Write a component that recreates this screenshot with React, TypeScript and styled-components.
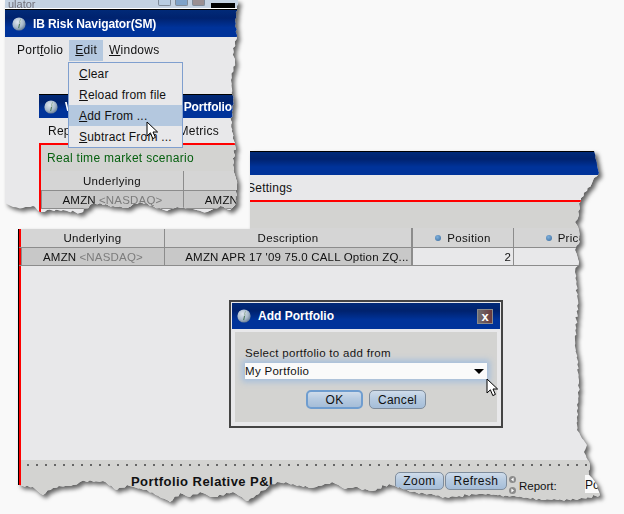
import React from "react";
import styled, { createGlobalStyle } from "styled-components";

type Pt = [number, number];

const torn = (anchors: Pt[], jagged: boolean[], ox: number, oy: number): string => {
  const out: string[] = [];
  let seed = 7;
  const rnd = () => {
    seed = (seed * 9301 + 49297) % 233280;
    return seed / 233280;
  };
  anchors.forEach((a, i) => {
    const b = anchors[(i + 1) % anchors.length];
    out.push(`${a[0] - ox}px ${a[1] - oy}px`);
    if (!jagged[i]) return;
    const len = Math.hypot(b[0] - a[0], b[1] - a[1]);
    const n = Math.floor(len / 3);
    for (let k = 1; k < n; k++) {
      const t = k / n;
      const s = k % 2 ? 1 : -1;
      const x = a[0] + (b[0] - a[0]) * t + s * rnd() * 1.3;
      const y = a[1] + (b[1] - a[1]) * t + s * rnd() * 1.3;
      out.push(`${(x - ox).toFixed(1)}px ${(y - oy).toFixed(1)}px`);
    }
  });
  return `polygon(${out.join(",")})`;
};

const bigRight: Pt[] = [
  [594, 151], [597, 165], [599, 173], [594, 178], [592, 183], [581, 198], [579, 215], [575, 222], [579, 230],
  [580, 240], [575, 250], [579, 262], [575, 272], [578, 300], [575, 340], [579, 380], [577, 430], [587, 445],
  [584, 452], [590, 465], [589, 475], [595, 482], [599, 492], [600, 495],
];
const bigBottom: Pt[] = [
  [579, 499], [545, 500], [512, 496], [479, 494], [459, 496], [445, 497], [429, 494], [412, 492], [389, 484],
  [372, 491], [355, 487], [345, 489], [332, 482], [312, 488], [293, 484], [277, 482], [267, 488], [248, 501],
  [233, 492], [213, 497], [200, 492], [190, 497], [180, 493], [170, 502], [147, 490], [127, 485], [117, 490],
  [103, 481], [80, 482], [73, 485], [53, 488], [43, 495], [33, 487], [18, 485],
];
const bigPts: Pt[] = [[250, 151], ...bigRight, ...bigBottom, [18, 229], [250, 229]];
const bigJag = bigPts.map((_, i) => i > 0 && i < bigPts.length - 3);
const bigClip = torn(bigPts, bigJag, 18, 151);

const smallPts: Pt[] = [
  [5, 0], [238, 0], [235, 20], [237, 35], [233, 48], [235, 62], [231, 80], [233, 100], [231, 125], [235, 145],
  [233, 165], [237, 185], [235, 205], [230, 210], [220, 206], [207, 212], [190, 209], [177, 207], [167, 211],
  [153, 206], [140, 202], [127, 208], [113, 206], [100, 203], [90, 205], [80, 213], [63, 210], [47, 210],
  [40, 212], [33, 206], [23, 208], [13, 207], [5, 203],
];
const smallJag = smallPts.map((_, i) => i > 0 && i < smallPts.length - 1);
const smallClip = torn(smallPts, smallJag, 0, 0);

const Global = createGlobalStyle`
  html, body { margin: 0; padding: 0; background: #f9f9f9; overflow: hidden; }
  body { font-family: "Liberation Sans", Arial, sans-serif; font-size: 12px; color: #111; }
`;

const Page = styled.div`
  position: relative;
  width: 624px;
  height: 514px;
  overflow: hidden;
  background: #f9f9f9;
`;

const Shadow = styled.div<{ $x: number; $y: number; $w: number; $h: number }>`
  position: absolute;
  left: ${(p) => p.$x}px;
  top: ${(p) => p.$y}px;
  width: ${(p) => p.$w}px;
  height: ${(p) => p.$h}px;
  filter: drop-shadow(3px 3px 2px rgba(0, 0, 0, 0.6));
`;

const Torn = styled.div`
  position: relative;
  width: 100%;
  height: 100%;
  display: flex;
  flex-direction: column;
  background: #e8e8ea;
`;

const TitleBar = styled.div<{ $h: number }>`
  flex: none;
  display: flex;
  align-items: center;
  gap: 7px;
  height: ${(p) => p.$h}px;
  padding-left: 5px;
  box-sizing: border-box;
  border-top: 1px solid #000;
  background: linear-gradient(#012a78 0%, #00226e 30%, #00339a 65%, #00339a 100%);
  color: #fff;
  font-weight: bold;
  font-size: 12px;
  letter-spacing: -0.1px;
  white-space: nowrap;
`;

const MenuBar = styled.div<{ $h: number; $pad: number }>`
  flex: none;
  display: flex;
  align-items: center;
  height: ${(p) => p.$h}px;
  padding-left: ${(p) => p.$pad}px;
  background: #e8e8ea;
  font-size: 12px;
  letter-spacing: 0.25px;
  white-space: nowrap;
`;

const RedLine = styled.div`
  flex: none;
  height: 2px;
  background: #f00;
`;

const GrayBand = styled.div`
  flex: none;
  height: 26px;
  display: flex;
  align-items: center;
  padding-left: 6px;
  background: #d3d3d1;
  color: #06600f;
  font-size: 12px;
  letter-spacing: 0.3px;
`;

const HeaderRow = styled.div<{ $cols: string }>`
  flex: none;
  display: grid;
  grid-template-columns: ${(p) => p.$cols};
  height: 19px;
  background: #d5d5d5;
  border-bottom: 1px solid #8c8c8c;
`;

const HeadCell = styled.div<{ $thick?: boolean }>`
  display: flex;
  align-items: center;
  justify-content: center;
  gap: 6px;
  border-right: ${(p) => (p.$thick ? 2 : 1)}px solid #8c8c8c;
  font-size: 11.5px;
  letter-spacing: 0.3px;
  white-space: nowrap;
  overflow: hidden;
`;

const Dot = styled.span`
  width: 6px;
  height: 6px;
  border-radius: 50%;
  background: radial-gradient(circle at 40% 35%, #7fb0dc, #37699c);
`;

const DataRow = styled.div<{ $cols: string }>`
  flex: none;
  display: grid;
  grid-template-columns: ${(p) => p.$cols};
  height: 17px;
  border-bottom: 1px solid #8c8c8c;
`;

const DataCell = styled.div<{ $shade?: boolean; $right?: boolean; $thick?: boolean; $edge?: boolean; $lead?: number }>`
  display: flex;
  align-items: center;
  justify-content: ${(p) => (p.$right ? "flex-end" : "center")};
  padding-right: ${(p) => (p.$right ? 2 : 0)}px;
  padding-left: ${(p) => p.$lead ?? 0}px;
  background: ${(p) => (p.$shade ? "#c8c8c8" : "#e8e8ea")};
  border-right: ${(p) => (p.$thick ? 2 : 1)}px solid #8c8c8c;
  border-left: ${(p) => (p.$edge ? "1px solid #8c8c8c" : "none")};
  font-size: 11.5px;
  letter-spacing: 0.2px;
  white-space: nowrap;
  overflow: hidden;
`;

const Muted = styled.span`
  color: #7c7c7c;
  margin-left: 3px;
`;

const Content = styled.div`
  flex: 1;
  display: flex;
  min-height: 0;
  border-left: 1px solid #000;
`;

const RedEdge = styled.div`
  flex: none;
  width: 2px;
  background: #f00;
`;

const ContentCol = styled.div`
  flex: 1;
  min-width: 0;
  display: flex;
  flex-direction: column;
`;

const BigTop = styled.div`
  flex: none;
  display: flex;
  flex-direction: column;
`;

const Spacer = styled.div`
  flex: 1;
`;

const BottomBar = styled.div`
  flex: none;
  height: 48px;
  box-sizing: border-box;
  padding-top: 4px;
  background: #d3d3d1;
  display: flex;
  flex-direction: column;
`;

const Dots = styled.div`
  height: 2px;
  margin: 0 0 0 6px;
  background: radial-gradient(circle at 1px 1px, #666 1px, transparent 1.4px) 0 0 / 9px 2px repeat-x;
`;

const BarRow = styled.div`
  display: flex;
  align-items: flex-start;
  padding: 6px 0 0 110px;
`;

const ChartTitle = styled.div`
  width: 264px;
  padding-top: 2px;
  font-weight: bold;
  font-size: 13px;
  letter-spacing: 0.45px;
  white-space: nowrap;
`;

const BarButton = styled.div<{ $w: number }>`
  width: ${(p) => p.$w}px;
  height: 18px;
  box-sizing: border-box;
  display: flex;
  align-items: center;
  justify-content: center;
  border: 1px solid #7e8c9c;
  border-radius: 5px;
  background: linear-gradient(#cfdcea 0%, #b7cbe1 45%, #a5bdd8 100%);
  font-size: 12px;
  letter-spacing: 0.4px;
  margin-right: 1px;
`;

const Arrows = styled.div`
  display: flex;
  flex-direction: column;
  gap: 4px;
  margin: 4px 3px 0 1px;
`;

const Report = styled.div`
  width: 66px;
  padding-top: 8px;
  font-size: 11.5px;
`;

const ReportBox = styled.div`
  width: 30px;
  height: 18px;
  margin-top: 3px;
  background: #fafafa;
  font-size: 12px;
  line-height: 20px;
`;

const Dialog = styled.div`
  position: absolute;
  left: 211px;
  top: 149px;
  width: 274px;
  height: 128px;
  box-sizing: border-box;
  border: 2px solid #444;
  background: #e8e8ea;
  padding: 1px;
  display: flex;
  flex-direction: column;
`;

const DialogTitle = styled.div`
  flex: none;
  height: 26px;
  display: flex;
  align-items: center;
  gap: 7px;
  padding-left: 5px;
  background: linear-gradient(#012a78 0%, #00226e 30%, #00339a 65%, #00339a 100%);
  color: #fff;
  font-size: 12px;
  font-weight: bold;
`;

const CloseBox = styled.div`
  margin-left: auto;
  margin-right: 7px;
  width: 16px;
  height: 15px;
  display: flex;
  align-items: center;
  justify-content: center;
  background: linear-gradient(90deg, #6f6f72, #6b3a3c);
  border: 1px solid #8a8a8a;
  box-sizing: border-box;
  font-weight: bold;
  font-size: 13px;
  line-height: 1;
`;

const DialogBody = styled.div`
  flex: 1;
  margin: 3px;
  padding: 15px 10px 0;
  background: #d3d3d1;
  display: flex;
  flex-direction: column;
`;

const DialogLabel = styled.div`
  font-size: 11.5px;
  letter-spacing: 0.3px;
  height: 16px;
`;

const SelectBox = styled.div`
  height: 16px;
  display: flex;
  align-items: center;
  justify-content: space-between;
  padding: 0 3px 0 0;
  background: #fafafa;
  box-shadow: 0 0 6px 3px #a6bfdc;
  font-size: 11.5px;
  letter-spacing: 0.3px;
`;

const Arrow = styled.span`
  width: 0;
  height: 0;
  border-left: 5px solid transparent;
  border-right: 5px solid transparent;
  border-top: 5px solid #000;
`;

const DialogButtons = styled.div`
  display: flex;
  justify-content: center;
  gap: 6px;
  margin-top: 11px;
`;

const DialogButton = styled.div<{ $def?: boolean }>`
  width: 57px;
  height: 19px;
  box-sizing: border-box;
  display: flex;
  align-items: center;
  justify-content: center;
  border: ${(p) => (p.$def ? "2px solid #6f9dcf" : "1px solid #7e8c9c")};
  border-radius: 5px;
  background: linear-gradient(#cfdcea 0%, #b7cbe1 45%, #a5bdd8 100%);
  font-size: 12px;
  letter-spacing: 0.3px;
`;

const Pointer = styled.svg<{ $x: number; $y: number }>`
  position: absolute;
  left: ${(p) => p.$x}px;
  top: ${(p) => p.$y}px;
  z-index: 5;
`;

const OldTitle = styled.div`
  flex: none;
  height: 8px;
  display: flex;
  align-items: flex-end;
  overflow: hidden;
  background: #c4d2e2;
  color: #70707a;
  font-size: 11px;
  line-height: 8px;
  border-bottom: 1px solid #fff;
  padding: 0 10px 0 8px;
`;

const OldButtons = styled.div`
  margin-left: auto;
  display: flex;
  height: 100%;
  gap: 4px;
  align-items: flex-start;
`;

const OldButton = styled.span<{ $c: string }>`
  width: 11px;
  height: 5px;
  border-radius: 0 0 2px 2px;
  background: ${(p) => p.$c};
  border: 1px solid #7f8b99;
  border-top: none;
`;

const OldBlack = styled.span`
  width: 24px;
  height: 5px;
  margin: 3px 0 0 2px;
  background: #000;
`;

const MenuItem = styled.span<{ $active?: boolean }>`
  height: 21px;
  display: flex;
  align-items: center;
  padding: 0 6px;
  background: ${(p) => (p.$active ? "#b4c8df" : "transparent")};
  u { text-decoration-thickness: 1px; text-underline-offset: 1px; }
`;

const Dropdown = styled.div`
  position: absolute;
  left: 68px;
  top: 62px;
  width: 115px;
  height: 86px;
  box-sizing: border-box;
  border: 1px solid #7f9fcf;
  background: #e8e8ea;
  z-index: 3;
  display: flex;
  flex-direction: column;
`;

const DropItem = styled.div<{ $active?: boolean }>`
  height: 21px;
  flex: none;
  display: flex;
  align-items: center;
  padding-left: 10px;
  background: ${(p) => (p.$active ? "#b4c8df" : "transparent")};
  font-size: 12px;
  letter-spacing: 0.2px;
  white-space: nowrap;
  u { text-decoration-thickness: 1px; text-underline-offset: 1px; }
`;

const InnerWindow = styled.div`
  position: absolute;
  left: 39px;
  top: 94px;
  width: 205px;
  height: 125px;
  display: flex;
  flex-direction: column;
  background: #e8e8ea;
  z-index: 1;
  overflow: hidden;
`;

const InnerContent = styled.div`
  flex: 1;
  display: flex;
  min-height: 0;
`;

const Spread = styled.span<{ $ml: number }>`
  margin-left: ${(p) => p.$ml}px;
`;

const Globe = ({ size = 14 }: { size?: number }) => (
  <svg width={size} height={size} viewBox="0 0 14 14">
    <defs>
      <radialGradient id="gl" cx="0.4" cy="0.35" r="0.7">
        <stop offset="0" stopColor="#dfe6ee" />
        <stop offset="0.6" stopColor="#a9bacb" />
        <stop offset="1" stopColor="#5f7690" />
      </radialGradient>
    </defs>
    <circle cx="7" cy="7" r="6.6" fill="url(#gl)" />
    <path d="M8.6 2.6 L6.6 11.2" stroke="#4f7a5e" strokeWidth="1.1" fill="none" />
    <path d="M9 2.6 L7.6 7" stroke="#f4f6f8" strokeWidth="0.7" fill="none" />
  </svg>
);

const Cursor = ({ x, y }: { x: number; y: number }) => (
  <Pointer $x={x} $y={y} width="14" height="20" viewBox="0 0 14 20">
    <path
      d="M1 1 L1 15 L4.4 11.8 L6.8 17.6 L9.4 16.4 L7 11 L11.6 11 Z"
      fill="#fff"
      stroke="#000"
      strokeWidth="1"
      strokeLinejoin="miter"
    />
  </Pointer>
);

const RoundArrow = ({ left }: { left?: boolean }) => (
  <svg width="7" height="7" viewBox="0 0 7 7">
    <circle cx="3.5" cy="3.5" r="3.5" fill="#8b8b8b" />
    <path d={left ? "M4.6 1.6 L2 3.5 L4.6 5.4 Z" : "M2.4 1.6 L5 3.5 L2.4 5.4 Z"} fill="#fff" />
  </svg>
);

const bigCols = "144px 248px 101px 1fr";
const smallCols = "143px 248px";

export default function App() {
  return (
    <Page>
      <Global />
      <Shadow $x={18} $y={151} $w={600} $h={357}>
        <Torn style={{ clipPath: bigClip }}>
          <Content>
            <ContentCol>
              <BigTop>
                <TitleBar $h={24}>
                  <span />
                </TitleBar>
                <MenuBar $h={25} $pad={228}>Settings</MenuBar>
                <RedLine />
                <GrayBand />
              </BigTop>
              <HeaderRow $cols={`2px ${bigCols}`}>
                <RedEdge />
                <HeadCell>Underlying</HeadCell>
                <HeadCell $thick>Description</HeadCell>
                <HeadCell><Dot />Position</HeadCell>
                <HeadCell><Dot />Price</HeadCell>
              </HeaderRow>
              <DataRow $cols={`2px ${bigCols}`}>
                <RedEdge />
                <DataCell $shade $edge>AMZN <Muted>&lt;NASDAQ&gt;</Muted></DataCell>
                <DataCell $shade $thick $lead={18}>AMZN APR 17 '09 75.0 CALL Option ZQ...</DataCell>
                <DataCell $right>2</DataCell>
                <DataCell />
              </DataRow>
              <InnerContent>
                <RedEdge />
                <ContentCol>
                  <Spacer />
                  <BottomBar>
                    <Dots />
                    <BarRow>
                      <ChartTitle>Portfolio Relative P&amp;L</ChartTitle>
                      <BarButton $w={49}>Zoom</BarButton>
                      <BarButton $w={62}>Refresh</BarButton>
                      <Arrows>
                        <RoundArrow left />
                        <RoundArrow />
                      </Arrows>
                      <Report>Report:</Report>
                      <ReportBox>Po</ReportBox>
                    </BarRow>
                  </BottomBar>
                </ContentCol>
              </InnerContent>
            </ContentCol>
          </Content>
          <Dialog>
            <DialogTitle>
              <Globe />
              Add Portfolio
              <CloseBox>x</CloseBox>
            </DialogTitle>
            <DialogBody>
              <DialogLabel>Select portfolio to add from</DialogLabel>
              <SelectBox>
                My Portfolio
                <Arrow />
              </SelectBox>
              <DialogButtons>
                <DialogButton $def>OK</DialogButton>
                <DialogButton>Cancel</DialogButton>
              </DialogButtons>
            </DialogBody>
          </Dialog>
          <Cursor x={468} y={227} />
        </Torn>
      </Shadow>

      <Shadow $x={0} $y={0} $w={245} $h={216}>
        <Torn style={{ clipPath: smallClip }}>
          <OldTitle>
            <span>ulator</span>
            <OldButtons>
              <OldButton $c="#b9cde2" />
              <OldButton $c="#7ea2c9" />
              <OldButton $c="#9a8f92" />
              <OldBlack />
            </OldButtons>
          </OldTitle>
          <TitleBar $h={28}>
            <span style={{ width: 0 }} />
            <Globe />
            IB Risk Navigator(SM)
          </TitleBar>
          <MenuBar $h={26} $pad={11}>
            <MenuItem>Port<u>f</u>olio</MenuItem>
            <MenuItem $active><u>E</u>dit</MenuItem>
            <MenuItem><u>W</u>indows</MenuItem>
          </MenuBar>
          <Dropdown>
            <DropItem><u>C</u>lear</DropItem>
            <DropItem><u>R</u>eload from file</DropItem>
            <DropItem $active><u>A</u>dd From ...</DropItem>
            <DropItem><u>S</u>ubtract From ...</DropItem>
          </Dropdown>
          <InnerWindow>
            <TitleBar $h={24}>
              <Globe />
              What-If Combination Portfolio
            </TitleBar>
            <MenuBar $h={25} $pad={9}>
              Report<Spread $ml={93}>Metrics</Spread><Spread $ml={12}>View</Spread>
            </MenuBar>
            <RedLine />
            <InnerContent>
              <RedEdge />
              <ContentCol>
                <GrayBand>Real time market scenario</GrayBand>
                <HeaderRow $cols={smallCols}>
                  <HeadCell>Underlying</HeadCell>
                  <HeadCell />
                </HeaderRow>
                <DataRow $cols={smallCols}>
                  <DataCell $shade $edge>AMZN <Muted>&lt;NASDAQ&gt;</Muted></DataCell>
                  <DataCell $shade $lead={18}>AMZN APR 17 '09 75.0 CALL Option ZQ...</DataCell>
                </DataRow>
              </ContentCol>
            </InnerContent>
          </InnerWindow>
          <Cursor x={146} y={121} />
        </Torn>
      </Shadow>
    </Page>
  );
}
